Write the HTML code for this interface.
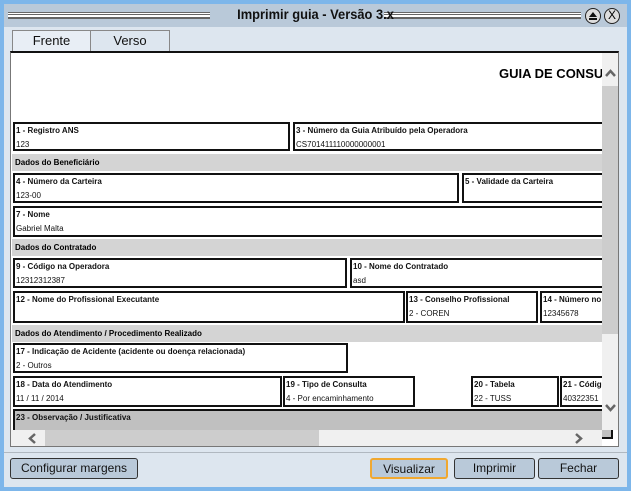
<!DOCTYPE html>
<html><head><meta charset="utf-8"><style>
*{margin:0;padding:0;box-sizing:border-box}
body{width:631px;height:491px;overflow:hidden;background:#7db6ea;font-family:"Liberation Sans",sans-serif;position:relative}
.a{position:absolute}
.win{left:4px;top:4px;width:623px;height:483px;background:#dde6ef}
.title{left:4px;top:4px;width:623px;height:23px;background:#b9c9d9}
.lines{position:absolute;height:7px;border-top:1px solid #666;border-bottom:1px solid #666;background:repeating-linear-gradient(#fff 0 1px,#666 1px 2px,#fff 2px 3px)}
.tt{left:0;top:6px;width:631px;text-align:center;font-size:14px;font-weight:bold;color:#111;transform:scaleX(0.92)}
.tab{top:30px;height:21px;border:1px solid #888;border-bottom:none;font-size:13px;text-align:center;line-height:20px;color:#111}
.panel{left:10px;top:51px;width:609px;height:396px;border:1px solid #777;border-top:2px solid #111;background:#fff;overflow:hidden}
.box{position:absolute;border:2px solid #111;font-size:8px;color:#111}
.box b{position:absolute;left:1px;top:2px;white-space:nowrap;font-weight:bold}
.box span{position:absolute;left:1px;top:16px;white-space:nowrap}
.band{position:absolute;left:1px;width:590px;height:17px;background:#d4d4d4;font-size:8px;font-weight:bold;line-height:17px;padding-left:3px}
.btn{position:absolute;top:458px;height:21px;border:1px solid #333;border-radius:3px;background:#b9c9d9;font-size:12px;text-align:center;line-height:19px;color:#111}
</style></head><body>
<div class="a win"></div>
<div class="a title"></div>
<div class="lines" style="left:8px;top:12px;width:202px"></div>
<div class="lines" style="left:384px;top:12px;width:197px"></div>
<div class="a tt">Imprimir guia - Versão 3.x</div>
<div class="a" style="left:585px;top:8px;width:16px;height:16px;border:1.5px solid #222;border-radius:50%;background:#ddd"><div style="position:absolute;left:3px;top:3px;width:0;height:0;border-left:4px solid transparent;border-right:4px solid transparent;border-bottom:5px solid #111"></div><div style="position:absolute;left:3px;top:9px;width:8px;height:1.5px;background:#111"></div></div>
<div class="a" style="left:604px;top:8px;width:16px;height:16px;border:1.5px solid #222;border-radius:50%;background:#ddd;font-size:12px;line-height:13px;text-align:center">X</div>
<div class="a tab" style="left:12px;width:79px;background:#e8eef5">Frente</div>
<div class="a tab" style="left:90px;width:80px;background:#dde6ef">Verso</div>
<div class="a panel">
 <div class="a" style="left:488px;top:13px;font-size:13px;font-weight:bold;white-space:nowrap">GUIA DE CONSULTA</div>
 <div class="box" style="left:2px;top:69px;width:277px;height:29px"><b>1 - Registro ANS</b><span>123</span></div>
 <div class="box" style="left:282px;top:69px;width:320px;height:29px"><b>3 - Número da Guia Atribuído pela Operadora</b><span>CS701411110000000001</span></div>
 <div class="band" style="top:101px">Dados do Beneficiário</div>
 <div class="box" style="left:2px;top:120px;width:446px;height:30px"><b>4 - Número da Carteira</b><span>123-00</span></div>
 <div class="box" style="left:451px;top:120px;width:150px;height:30px"><b>5 - Validade da Carteira</b></div>
 <div class="box" style="left:2px;top:153px;width:600px;height:31px"><b>7 - Nome</b><span>Gabriel Malta</span></div>
 <div class="band" style="top:186px">Dados do Contratado</div>
 <div class="box" style="left:2px;top:205px;width:334px;height:30px"><b>9 - Código na Operadora</b><span>12312312387</span></div>
 <div class="box" style="left:339px;top:205px;width:262px;height:30px"><b>10 - Nome do Contratado</b><span>asd</span></div>
 <div class="box" style="left:2px;top:238px;width:392px;height:32px"><b>12 - Nome do Profissional Executante</b></div>
 <div class="box" style="left:395px;top:238px;width:132px;height:32px"><b>13 - Conselho Profissional</b><span>2 - COREN</span></div>
 <div class="box" style="left:529px;top:238px;width:72px;height:32px"><b>14 - Número no Conselho</b><span>12345678</span></div>
 <div class="band" style="top:272px">Dados do Atendimento / Procedimento Realizado</div>
 <div class="box" style="left:2px;top:290px;width:335px;height:30px"><b>17 - Indicação de Acidente (acidente ou doença relacionada)</b><span>2 - Outros</span></div>
 <div class="box" style="left:2px;top:323px;width:269px;height:31px"><b>18 - Data do Atendimento</b><span>11 / 11 / 2014</span></div>
 <div class="box" style="left:272px;top:323px;width:132px;height:31px"><b>19 - Tipo de Consulta</b><span>4 - Por encaminhamento</span></div>
 <div class="box" style="left:460px;top:323px;width:88px;height:31px"><b>20 - Tabela</b><span>22 - TUSS</span></div>
 <div class="box" style="left:549px;top:323px;width:52px;height:31px"><b>21 - Código do Procedimento</b><span>40322351</span></div>
 <div class="box" style="left:2px;top:356px;width:600px;height:30px;background:#c0c0c0"><b>23 - Observação / Justificativa</b></div>
 <div class="a" style="left:591px;top:0;width:17px;height:377px;background:#f0f0f0"><div style="position:absolute;left:0;top:33px;width:17px;height:248px;background:#cdcdcd"></div>
  <svg style="position:absolute;left:2px;top:15px" width="13" height="10"><path d="M2 8 L6.5 3 L11 8" fill="none" stroke="#666" stroke-width="2.5"/></svg>
  <svg style="position:absolute;left:2px;top:350px" width="13" height="10"><path d="M2 2 L6.5 7 L11 2" fill="none" stroke="#666" stroke-width="2.5"/></svg></div>
 <div class="a" style="left:0;top:377px;width:591px;height:17px;background:#f0f0f0"><div style="position:absolute;left:34px;top:0;width:274px;height:17px;background:#cdcdcd"></div>
  <svg style="position:absolute;left:16px;top:2px" width="10" height="13"><path d="M8 2 L3 6.5 L8 11" fill="none" stroke="#666" stroke-width="2.5"/></svg>
  <svg style="position:absolute;left:563px;top:2px" width="10" height="13"><path d="M2 2 L7 6.5 L2 11" fill="none" stroke="#666" stroke-width="2.5"/></svg></div>
</div>
<div class="a" style="left:4px;top:452px;width:623px;height:1px;background:#b0b8c0"></div>
<div class="btn" style="left:10px;width:128px">Configurar margens</div>
<div class="btn" style="left:370px;width:78px;border:2px solid #f0a830">Visualizar</div>
<div class="btn" style="left:454px;width:81px">Imprimir</div>
<div class="btn" style="left:538px;width:81px">Fechar</div>
</body></html>
